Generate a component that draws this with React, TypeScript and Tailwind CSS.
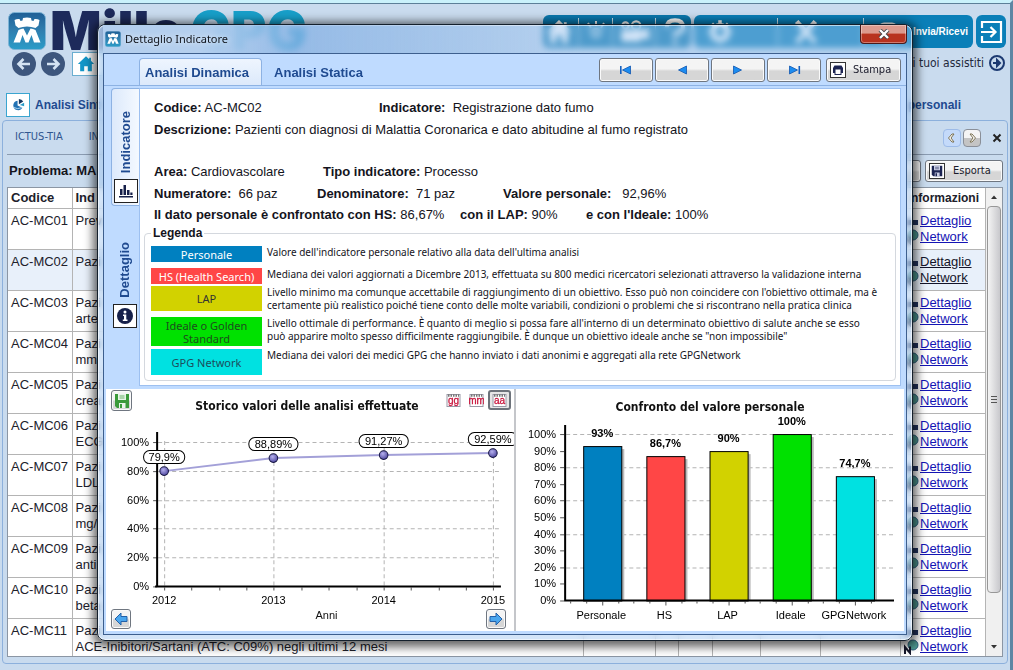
import type { ReactNode } from "react";

const UI = "font-['DejaVu_Sans_Condensed','Noto_Sans',sans-serif]";

const rows = [
  { code: "AC-MC01", lines: ["Prev"] },
  { code: "AC-MC02", lines: ["Pazi"], selected: true },
  { code: "AC-MC03", lines: ["Pazi", "arte"] },
  { code: "AC-MC04", lines: ["Pazi", "mm"] },
  { code: "AC-MC05", lines: ["Pazi", "crea"] },
  { code: "AC-MC06", lines: ["Pazi", "ECG"] },
  { code: "AC-MC07", lines: ["Pazi", "LDL"] },
  { code: "AC-MC08", lines: ["Pazi", "mg/"] },
  { code: "AC-MC09", lines: ["Pazi", "anti"] },
  { code: "AC-MC10", lines: ["Pazi", "beta"] },
  { code: "AC-MC11", lines: ["Pazi", "ACE-Inibitori/Sartani (ATC: C09%) negli ultimi 12 mesi"] },
];

const legend = [
  {
    name: "Personale",
    box: "h-4 mb-1.5 bg-[#0080c0] text-white",
    text: "Valore dell'indicatore personale relativo alla data dell'ultima analisi",
  },
  {
    name: "HS (Health Search)",
    box: "h-4 mb-0.5 bg-[#ff4646] text-white",
    text: "Mediana dei valori aggiornati a Dicembre 2013, effettuata su 800 medici ricercatori selezionati attraverso la validazione interna",
  },
  {
    name: "LAP",
    box: "h-[25px] mb-1.5 bg-[#d2d200] text-[#333]",
    text: "Livello minimo ma comunque accettabile di raggiungimento di un obiettivo. Esso può non coincidere con l'obiettivo ottimale, ma è certamente più realistico poiché tiene conto delle molte variabili, condizioni o problemi che si riscontrano nella pratica clinica",
  },
  {
    name: "Ideale o Golden Standard",
    box: "h-[29px] mb-[3px] bg-[#00e100] text-[#1d4d1d]",
    text: "Livello ottimale di performance. È quanto di meglio si possa fare all'interno di un determinato obiettivo di salute anche se esso può apparire molto spesso difficilmente raggiungibile. È dunque un obiettivo ideale anche se \"non impossibile\"",
  },
  {
    name: "GPG Network",
    box: "h-[26px] bg-[#00e1e1] text-[#1d4d5d]",
    text: "Mediana dei valori dei medici GPG che hanno inviato i dati anonimi e aggregati alla rete GPGNetwork",
  },
];

function Tower({ className }: { className: string }) {
  return (
    <svg viewBox="0 0 38 38" className={className} aria-hidden="true">
      <defs>
        <linearGradient id="towerBg" x1="0" y1="0" x2="0" y2="1">
          <stop offset="0" stopColor="#1f5f96" />
          <stop offset="0.5" stopColor="#2f7fb0" />
          <stop offset="1" stopColor="#2a9cc8" />
        </linearGradient>
      </defs>
      <rect x="0.5" y="0.5" width="37" height="37" rx="6" fill="url(#towerBg)" stroke="#7fb4d6" />
      <path
        fill="#fff"
        d="M6.500 8 Q9 6.500 11.500 7 L12.500 9 L14.500 8.500 L15 6 Q19 5 23 6 L23.500 8.500 L25.500 9 L26.500 7 Q29 6.500 31.500 8 L30.500 13.500 L27.500 16 Q19 13 10.500 16 L7.500 13.500 Z"
      />
      <path fill="#fff" d="M10.500 18 Q13 16.500 15.500 16.500 L19 23.500 L22.500 16.500 Q25 16.500 27.500 18 L32.500 30.500 H26 L23.500 23 L20.500 30.500 H17.500 L14.500 23 L12 30.500 H5.500 Z" />
    </svg>
  );
}

function CircleArrow({ flip }: { flip?: boolean }) {
  return (
    <svg viewBox="0 0 24 24" className="size-6" aria-hidden="true">
      <circle cx="12" cy="12" r="12" fill="#3d567d" />
      <path
        d={flip ? "M6 12 H17 M12.500 7 L17.500 12 L12.500 17" : "M18 12 H7 M11.500 7 L6.500 12 L11.500 17"}
        stroke="#d4e3f3"
        strokeWidth="2.600"
        fill="none"
      />
    </svg>
  );
}

function HomeShape({ className, color }: { className: string; color: string }) {
  return (
    <svg viewBox="0 0 20 20" className={className} aria-hidden="true">
      <path d="M10 1.500 L1 10 H3.500 V18 H8 V12.500 H12 V18 H16.500 V10 H19 L15.500 6.500 V3 H13.500 V4.800 Z" fill={color} />
    </svg>
  );
}

function Floppy({ className, color, label }: { className: string; color: string; label: string }) {
  return (
    <svg viewBox="0 0 16 16" className={className} aria-hidden="true">
      <path d="M1 1 H15 V15 H3 L1 13 Z" fill={color} />
      <rect x="4" y="1" width="8" height="6" fill={label} />
      <path d="M5.500 3 H10.500 M5.500 5 H10.500" stroke={color} strokeWidth="0.700" />
      <rect x="5" y="10" width="6.500" height="5" fill={label} />
      <rect x="6" y="11" width="2" height="4" fill={color} />
    </svg>
  );
}

function GreyButton({ label, className, children }: { label?: string; className: string; children: ReactNode }) {
  return (
    <button
      type="button"
      aria-label={label}
      className={`flex shrink-0 items-center rounded-[3px] border border-[#6f7680] bg-linear-to-b from-[#f4f4f4] from-45% to-[#d6d6d6] to-55% text-[#1a1a2a] shadow-[inset_0_0_0_1px_#fafafa] ${className}`}
    >
      {children}
    </button>
  );
}

function NavGlyph({ kind }: { kind: "first" | "prev" | "next" | "last" }) {
  const left = kind === "first" || kind === "prev";
  return (
    <svg viewBox="0 0 14 10" className="h-2.5 w-3.5" aria-hidden="true">
      <path d={left ? "M11.500 1 L3.500 5 L11.500 9 Z" : "M2.500 1 L10.500 5 L2.500 9 Z"} fill="#1c8cf0" stroke="#1157b0" strokeWidth="0.800" />
      {kind === "first" && <rect x="1" y="1" width="1.600" height="8" fill="#1560c0" />}
      {kind === "last" && <rect x="11.500" y="1" width="1.600" height="8" fill="#1560c0" />}
    </svg>
  );
}

function Field({ name, value, className }: { name: string; value: string; className?: string }) {
  return (
    <span className={`whitespace-pre ${className ?? ""}`}>
      <b>{name}</b> {value}
    </span>
  );
}

function CalendarButton({ text, active }: { text: string; active?: boolean }) {
  return (
    <button
      type="button"
      aria-pressed={!!active}
      className={`flex h-5 w-[23px] items-center justify-center rounded-[3px] ${active ? "border-2 border-[#6d737b] bg-[#e6e6e6]" : ""}`}
    >
      <svg viewBox="0 0 15 14" className="h-3.5 w-[15px] shrink-0">
        <rect x="1" y="1.500" width="13" height="12" fill="#fff" stroke="#9a9aa8" />
        <path d="M2 2.500 H13" stroke="#777" strokeWidth="2.500" strokeDasharray="1.500 1" />
        <text x="7.500" y="11" textAnchor="middle" fontSize="10" fill="#c8143c" stroke="#c8143c" strokeWidth="0.300" fontFamily="Liberation Sans">
          {text}
        </text>
      </svg>
    </button>
  );
}

function BlueArrow({ flip }: { flip?: boolean }) {
  return (
    <svg viewBox="0 0 14 14" className="size-3.5" aria-hidden="true">
      <path
        d={flip ? "M1 4.500 H7 V1 L13 7 L7 13 V9.500 H1 Z" : "M13 4.500 H7 V1 L1 7 L7 13 V9.500 H13 Z"}
        fill="#4aa6ee"
        stroke="#2360a8"
      />
    </svg>
  );
}

function HistoryChart() {
  const ticks = [
    ["100%", 23],
    ["80%", 52],
    ["60%", 81],
    ["40%", 109],
    ["20%", 138],
    ["0%", 167],
  ] as const;
  const points = [
    { year: "2012", x: 58, y: 52, label: "79,9%", lx: 58, ly: 38, w: 41 },
    { year: "2013", x: 167, y: 39, label: "88,89%", lx: 167, ly: 25, w: 49 },
    { year: "2014", x: 277, y: 36, label: "91,27%", lx: 277, ly: 22, w: 49 },
    { year: "2015", x: 386, y: 34, label: "92,59%", lx: 386, ly: 20, w: 49 },
  ];
  return (
    <svg viewBox="0 0 407 188" className="block w-full" fontFamily="Liberation Sans, sans-serif" fontSize="11">
      <defs>
        <radialGradient id="dot" cx="0.4" cy="0.35" r="0.7">
          <stop offset="0" stopColor="#b5b0ee" />
          <stop offset="1" stopColor="#4a429c" />
        </radialGradient>
      </defs>
      {ticks.map(([t, y]) => (
        <g key={t}>
          {y < 167 && <path d={`M52 ${y + 0.5} H394`} stroke="#b4b4b4" strokeDasharray="4 3" />}
          <path d={`M47 ${y + 0.5} H51`} stroke="#555" />
          <text x="43" y={y + 4} textAnchor="end">{t}</text>
        </g>
      ))}
      {points.map((p) => (
        <g key={p.year}>
          <path d={`M${p.x + 0.5} 22 V166`} stroke="#b4b4b4" strokeDasharray="4 3" />
          <text x={p.x} y="185" textAnchor="middle">{p.year}</text>
        </g>
      ))}
      {[58, 85, 113, 140, 167, 195, 222, 250, 277, 304, 332, 359, 386].map((x) => (
        <path key={x} d={`M${x + 0.5} 168 V171`} stroke="#555" />
      ))}
      <path d="M51 13 V167.500 M49 167 H394" stroke="#000" strokeWidth="2" />
      <path d="M58 52 L167 39 L277 36 L386 34" stroke="#a3a0d8" strokeWidth="2" fill="none" />
      {points.map((p) => (
        <g key={p.label}>
          <circle cx={p.x} cy={p.y} r="4.300" fill="url(#dot)" stroke="#161640" />
          <rect x={p.lx - p.w / 2} y={p.ly - 6.500} width={p.w} height="13" rx="6" fill="#fff" stroke="#000" />
          <text x={p.lx} y={p.ly + 4} textAnchor="middle">{p.label}</text>
        </g>
      ))}
    </svg>
  );
}

function CompareChart() {
  const bars = [
    { name: "Personale", value: 93, label: "93%", color: "#0080c0" },
    { name: "HS", value: 86.7, label: "86,7%", color: "#ff4646" },
    { name: "LAP", value: 90, label: "90%", color: "#d2d200" },
    { name: "Ideale", value: 100, label: "100%", color: "#00e100" },
    { name: "GPGNetwork", value: 74.7, label: "74,7%", color: "#00e1e1" },
  ];
  const yOf = (v: number) => Math.round(186 - v * 1.66);
  return (
    <svg viewBox="0 0 387 208" className="block w-full" fontFamily="Liberation Sans, sans-serif" fontSize="11">
      {[0, 10, 20, 30, 40, 50, 60, 70, 80, 90, 100].map((v) => (
        <g key={v}>
          {v > 0 && v % 20 === 0 && <path d={`M50 ${yOf(v) + 0.5} H377`} stroke="#b4b4b4" strokeDasharray="4 3" />}
          <path d={`M44 ${yOf(v) + 0.5} H48`} stroke="#555" />
          <text x="40" y={yOf(v) + 4} textAnchor="end">{v}%</text>
        </g>
      ))}
      {bars.map((b, i) => {
        const x = 67 + i * 63;
        const y = yOf(b.value);
        return (
          <g key={b.name}>
            <rect x={x + 2} y={y + 3} width="39" height={183 - y} fill="#bbb" />
            <rect x={x + 0.5} y={y + 0.5} width="38" height={186 - y} fill={b.color} stroke="#000" />
            <text x={x + 19} y={y - 9} textAnchor="middle" fontWeight="bold">{b.label}</text>
            <text x={x + 18} y="204" textAnchor="middle">{b.name}</text>
            {[-13, 3, 19, 35].map((o) => (
              <path key={o} d={`M${x + o + 0.5} 187 V${o === 19 ? 191 : 189}`} stroke="#555" />
            ))}
          </g>
        );
      })}
      <path d="M49 11 V187 M48 186 H377" stroke="#000" strokeWidth="2" />
    </svg>
  );
}

function AppWindow() {
  return (
    <div className="flex h-full flex-col border-t-[3px] border-r-[3px] border-t-[#c9f1fb] border-r-[#5d86a3] bg-[#c9dbee]">
      <header className="flex justify-between border-t border-[#5c7f98] pt-[7px] pr-1 pl-2">
        <div>
          <div className="flex h-10 items-center gap-1">
            <Tower className="size-[38px]" />
            <span className="font-['Inter',sans-serif] text-[54px] leading-10 font-black text-[#1d2a5b]">
              Mille<span className="ml-2 text-[#189fc9]">GPG</span>
            </span>
          </div>
          <div className="mt-px flex items-center gap-[5px] pl-1">
            <button type="button" aria-label="Indietro"><CircleArrow /></button>
            <button type="button" aria-label="Avanti"><CircleArrow flip /></button>
            <button type="button" aria-label="Home" className="ml-0.5 flex h-6 w-8 items-center border border-[#6aaed0] bg-white pl-1">
              <HomeShape className="size-[18px]" color="#1496c8" />
            </button>
          </div>
        </div>
        <div className="flex flex-col items-end pt-1">
          <div className="flex gap-[3px]">
            <div className="flex h-[33px] w-[148px] items-center justify-around rounded-md bg-[#0a78ae]">
              <HomeShape className="size-7" color="#fff" />
              <i className="h-7 w-px bg-white/80" />
              <svg viewBox="0 0 24 24" className="size-6"><path d="M12 1 V6 M4 3 L7 8 M20 3 L17 8 M8 13 A4 4 0 1 0 16 13 A4 4 0 1 0 8 13" stroke="#fff" strokeWidth="2" fill="none" /></svg>
              <i className="h-7 w-px bg-white/80" />
              <svg viewBox="0 0 30 24" className="h-7 w-8"><path d="M3 11 H22 L29 8 V20 L22 17 V21 H3 Z" fill="#fff" /><circle cx="7" cy="6" r="3" fill="none" stroke="#fff" strokeWidth="2" /><circle cx="17" cy="6" r="4" fill="none" stroke="#fff" strokeWidth="2" /></svg>
              <i className="h-7 w-px bg-white/80" />
              <svg viewBox="0 0 24 24" className="size-7"><path d="M5 8 Q5 2 12 2 Q19 2 19 8 Q19 12 12 13.500 V16 M12 19 V22.500" stroke="#fff" strokeWidth="3.500" fill="none" /></svg>
            </div>
            <div className="flex h-[33px] w-[279px] items-center justify-between rounded-md bg-[#0a7fb8] pr-[5px] pl-3">
              <svg viewBox="0 0 24 24" className="size-7"><circle cx="12" cy="12" r="6" fill="none" stroke="#fff" strokeWidth="4" /><path d="M12 2 V6 M12 18 V22 M2 12 H6 M18 12 H22 M5 5 L8 8 M16 16 L19 19 M19 5 L16 8 M8 16 L5 19" stroke="#fff" strokeWidth="3" /></svg>
              <i className="ml-7 h-7 w-px bg-white/80" />
              <svg viewBox="0 0 24 24" className="size-7"><path d="M4 3 L20 21 M20 3 L4 21" stroke="#fff" strokeWidth="4" /></svg>
              <i className="ml-7 h-7 w-px bg-white/80" />
              <svg viewBox="0 0 20 24" className="h-7 w-5"><rect x="2" y="4" width="16" height="16" rx="4" fill="none" stroke="#fff" strokeWidth="3" /></svg>
              <span className="font-['Liberation_Sans',sans-serif] text-[10px] font-bold text-white">Invia/Ricevi</span>
            </div>
            <button type="button" aria-label="Esci" className="flex h-[33px] w-[30px] items-center justify-center rounded-md bg-[#0a7fb8]">
              <svg viewBox="0 0 24 24" className="size-6" fill="none" stroke="#fff" strokeWidth="2.200">
                <path d="M3 8 V2 H22 V22 H3 V16 M2 12 H16 M11.500 7 L16.500 12 L11.500 17" />
              </svg>
            </button>
          </div>
          <a href="#assistiti" className={`mt-1.5 flex items-center gap-1 text-[12px] text-[#1f2a3c] ${UI}`}>
            i tuoi assistiti
            <svg viewBox="0 0 18 18" className="size-[18px]"><circle cx="9" cy="9" r="7" fill="none" stroke="#1d3a72" strokeWidth="2" /><path d="M5 9 H11 M9 6 L12 9 L9 12 Z" stroke="#1d3a72" strokeWidth="2" fill="#1d3a72" /></svg>
          </a>
        </div>
      </header>

      <nav className="mt-[15px] flex h-7 items-center justify-between pr-[49px] pl-1.5 text-[12px] font-bold text-[#1f4a90]">
        <a href="#sintesi" className="flex items-center gap-[5px]">
          <span className="flex size-6 items-center justify-center border border-[#3aa5d0] bg-white">
            <svg viewBox="0 0 16 16" className="size-3.5"><path d="M7.500 3 A5.500 5.500 0 1 0 13 11 L7.500 8.500 Z" fill="#2272b4" /><path d="M9 1 V7 L14 4 A6 6 0 0 0 9 1" fill="#16365f" /><path d="M10 8 L15 5.500 V9.500 Z" fill="#2a9cc8" /><path d="M2.500 10.500 Q7 13.500 12.500 11" stroke="#bfe0f5" fill="none" /></svg>
          </span>
          Analisi Sint
        </a>
        <a href="#personali">personali</a>
      </nav>

      <section className="mt-px mr-0.5 mb-1.5 ml-0.5 flex min-h-0 flex-1 flex-col rounded border border-[#8cb0dc] px-1 pb-1.5">
        <div className={`flex h-[34px] shrink-0 items-center justify-between border-b border-[#8a9bb0] pl-2 text-[11px] text-[#2f568f] ${UI}`}>
          <div className="flex gap-[26px]">
            <a href="#ictus">ICTUS-TIA</a>
            <a href="#in">IN</a>
          </div>
          <div className="flex items-center gap-0.5">
            <button type="button" aria-label="Scorri a sinistra" className="flex size-[18px] items-center justify-center rounded border border-[#9dbbe8] bg-[#c4dafa]">
              <svg viewBox="0 0 10 10" className="size-2.5" fill="#fff" stroke="#7a7050"><path d="M5 1 L1.500 5 L5 9 H7 L4 5 L7 1 Z" /></svg>
            </button>
            <button type="button" aria-label="Scorri a destra" className="flex size-[18px] items-center justify-center rounded border border-[#8a8f98] bg-linear-to-b from-[#f4f4f4] from-50% to-[#c4c4c4] to-50%">
              <svg viewBox="0 0 10 10" className="size-2.5" fill="#fff" stroke="#7a7050"><path d="M5 1 L8.500 5 L5 9 H3 L6 5 L3 1 Z" /></svg>
            </button>
            <button type="button" aria-label="Chiudi scheda" className="ml-2 flex size-3 items-center justify-center">
              <svg viewBox="0 0 10 10" className="size-2.5"><path d="M1.500 1.500 L8.500 8.500 M8.500 1.500 L1.500 8.500" stroke="#222" strokeWidth="2" /></svg>
            </button>
          </div>
        </div>
        <div className="flex h-8 shrink-0 items-center justify-between pl-0.5">
          <h2 className="text-[13px] font-bold text-[#14141c]">Problema: MA</h2>
          <div className={`flex gap-1 text-[11px] ${UI}`}>
            <GreyButton label="Stampa elenco" className="h-[22px] w-10">{null}</GreyButton>
            <GreyButton className="h-[22px] w-[78px] gap-2 pl-[3px]">
              <span className="border border-[#333] bg-white p-px"><Floppy className="size-3" color="#1c2452" label="#c9cde4" /></span>
              Esporta
            </GreyButton>
          </div>
        </div>
        <div className="flex min-h-0 flex-1 border border-[#8b96a4] bg-white">
          <div className="min-w-0 flex-1 overflow-hidden">
            <table className="w-full table-fixed border-collapse text-[13px] leading-4 text-[#20202a]">
              <colgroup>
                <col className="w-16" />
                <col />
                <col className="w-[72px]" />
                <col className="w-[23px]" />
                <col className="w-[34px]" />
                <col className="w-12" />
                <col className="w-[60px]" />
                <col className="w-20" />
                <col className="w-[85px]" />
              </colgroup>
              <thead>
                <tr className="h-5 border-b border-[#b4b4b4] text-left">
                  <th className="border-r border-[#b4b4b4] pl-[3px]">Codice</th>
                  <th className="border-r border-[#b4b4b4] pl-[3px]">Ind</th>
                  <th colSpan={6} className="border-r border-[#b4b4b4]" />
                  <th className="border-r border-[#b4b4b4] pr-1.5 text-right text-[12px]">nformazioni</th>
                </tr>
              </thead>
              <tbody>
                {rows.map((r) => (
                  <tr key={r.code} className={`h-[41px] border-b border-[#b4b4b4] align-top ${r.selected ? "bg-[#e8f0fa]" : ""}`}>
                    <td className="border-r border-[#b4b4b4] pt-1 pl-[3px]">{r.code}</td>
                    <td className="border-r border-[#b4b4b4] pt-1 pl-[3px] whitespace-nowrap">
                      {r.lines.map((l) => (
                        <div key={l}>{l}</div>
                      ))}
                    </td>
                    <td className="border-r border-[#b4b4b4]" />
                    <td className="border-r border-[#b4b4b4]" />
                    <td className="border-r border-[#b4b4b4]" />
                    <td className="border-r border-[#b4b4b4]" />
                    <td className="border-r border-[#b4b4b4]" />
                    <td className="border-r border-[#b4b4b4]" />
                    <td className="border-r border-[#b4b4b4] pt-1">
                      <div className="flex gap-px pl-0.5">
                        <svg viewBox="0 0 16 32" className="h-8 w-4"><rect x="2" y="7" width="13" height="5" fill="#23345f" /><circle cx="10" cy="22" r="5" fill="#4f9a92" stroke="#2d5f7d" /><path d="M2 31 V24 L7 30 V23.500" stroke="#16182c" strokeWidth="2" fill="none" /></svg>
                        <div className={`flex flex-col underline ${r.selected ? "text-[#14142a]" : "text-[#1414b4]"}`}>
                          <a href="#dettaglio">Dettaglio</a>
                          <a href="#network">Network</a>
                        </div>
                      </div>
                    </td>
                  </tr>
                ))}
              </tbody>
            </table>
          </div>
          <div className="flex w-4 shrink-0 flex-col items-center justify-between bg-[#f0f0f0]">
            <svg viewBox="0 0 16 18" className="h-[18px] w-4"><path d="M5 11 L8 7.500 L11 11 Z" fill="#333" /></svg>
            <div className="mb-[45px] flex w-3.5 flex-1 flex-col items-center justify-center gap-0.5 rounded-sm border border-[#979797] bg-linear-to-r from-[#f4f4f4] to-[#c8c8cc]">
              <i className="h-px w-1.5 bg-[#555]" />
              <i className="h-px w-1.5 bg-[#555]" />
              <i className="h-px w-1.5 bg-[#555]" />
            </div>
            <svg viewBox="0 0 16 18" className="h-[18px] w-4"><path d="M5 7 L8 10.500 L11 7 Z" fill="#333" /></svg>
          </div>
        </div>
      </section>
    </div>
  );
}

function Dialog() {
  return (
    <div
      role="dialog"
      aria-label="Dettaglio Indicatore"
      className="absolute top-6 right-[100px] left-[97px] rounded-lg border border-[#14202c] bg-[#a0c6f0]/45 px-[5px] pb-[5px] shadow-[0_2px_10px_4px_rgba(0,0,0,0.6),inset_0_0_0_1px_rgba(255,255,255,0.6)] backdrop-blur-[3px]"
    >
      <div className="flex h-7 justify-between bg-linear-to-r from-[#b4cfee] from-12% via-[#7fabe0]/60 via-24% to-transparent to-60%">
        <div className="flex items-center gap-1 pl-0.5">
          <Tower className="size-4" />
          <h1 className="font-['Noto_Sans',sans-serif] text-[11px] text-[#10141c] text-shadow-[0_0_6px_#fff]">Dettaglio Indicatore</h1>
        </div>
        <button
          type="button"
          aria-label="Chiudi"
          className="flex h-[19px] w-[47px] items-center justify-center rounded-b border border-t-0 border-[#4b1a1a] bg-linear-to-b from-[#dc9a8e] from-45% to-[#b8331f] to-50% shadow-[inset_0_0_0_1px_rgba(255,255,255,0.35)]"
        >
          <svg viewBox="0 0 12 10" className="h-2.5 w-3"><path d="M2 1 L10 9 M10 1 L2 9" stroke="#444" strokeWidth="4" /><path d="M2 1 L10 9 M10 1 L2 9" stroke="#fff" strokeWidth="2.400" /></svg>
        </button>
      </div>

      <div className="border border-[#3d5f8e] bg-[#bfdbff]">
        <div className="flex h-[31px] items-end justify-between pr-[5px] pl-[35px]">
          <div role="tablist" className="flex text-[13px] font-bold text-[#1f4a90]">
            <button type="button" role="tab" aria-selected="true" className="h-[27px] rounded-t border border-b-0 border-[#8db2e3] bg-linear-to-b from-[#eef5fe] to-[#dce9fb] pt-0.5 pr-3 pl-[5px] font-bold">
              Analisi Dinamica
            </button>
            <button type="button" role="tab" aria-selected="false" className="h-[27px] px-3 pt-0.5 font-bold">
              Analisi Statica
            </button>
          </div>
          <div className={`mb-[3px] flex gap-0.5 text-[11px] ${UI}`}>
            <GreyButton label="Primo" className="h-6 w-[54px] justify-center"><NavGlyph kind="first" /></GreyButton>
            <GreyButton label="Precedente" className="h-6 w-[54px] justify-center"><NavGlyph kind="prev" /></GreyButton>
            <GreyButton label="Successivo" className="h-6 w-[54px] justify-center"><NavGlyph kind="next" /></GreyButton>
            <GreyButton label="Ultimo" className="h-6 w-[54px] justify-center"><NavGlyph kind="last" /></GreyButton>
            <GreyButton className="ml-[3px] h-6 w-[75px] gap-[7px] pl-[3px]">
              <span className="border border-[#333] bg-white p-px">
                <svg viewBox="0 0 12 12" className="size-3"><path d="M2.500 1.500 H9.500 L11 4 V9 H9.500 V11 H2.500 V9 H1 V4 Z" fill="#1c2452" /><rect x="3.500" y="5.500" width="5" height="4.500" fill="#fff" /></svg>
              </span>
              Stampa
            </GreyButton>
          </div>
        </div>

        <div className="flex border-t border-[#8db2e3] pt-0.5 pr-[5px] pl-[7px]">
          <div role="tablist" aria-orientation="vertical" className="flex w-7 shrink-0 flex-col text-[13px] font-bold text-[#1f4a90]">
            <button type="button" role="tab" aria-selected="true" className="flex h-[118px] flex-col items-center justify-end gap-1.5 rounded-l border border-r-0 border-[#8db2e3] bg-linear-to-r from-[#dce9fb] to-[#f4f9ff] pb-0.5">
              <span className="rotate-180 [writing-mode:vertical-rl]">Indicatore</span>
              <span className="flex size-6 items-center justify-center border border-[#222] bg-white">
                <svg viewBox="0 0 16 16" className="size-4" fill="#16204a"><path d="M1 13 H15 V14.500 H1 Z M2 6 H4.500 V12 H2 Z M5.500 2 H8 V12 H5.500 Z M9 7 H11.500 V12 H9 Z M12.300 9.500 H14.500 V12 H12.300 Z" /></svg>
              </span>
            </button>
            <button type="button" role="tab" aria-selected="false" className="flex h-[122px] flex-col items-center justify-end gap-1.5">
              <span className="rotate-180 [writing-mode:vertical-rl]">Dettaglio</span>
              <span className="flex size-6 items-center justify-center border border-[#222] bg-white">
                <svg viewBox="0 0 16 16" className="size-4"><circle cx="8" cy="8" r="8" fill="#16204a" /><circle cx="8" cy="4" r="1.500" fill="#fff" /><path d="M6 6.500 H9.300 V11.500 H10.500 V13 H5.800 V11.500 H7 V8 H6 Z" fill="#fff" /></svg>
              </span>
            </button>
          </div>

          <div role="tabpanel" className="min-w-0 flex-1 border border-[#9dc0f0] bg-white px-1 pt-2 pb-1 text-[13px] leading-[22px] text-[#14141c]">
            <div className="pl-2.5">
              <div className="flex"><Field className="w-[225px]" name="Codice:" value="AC-MC02" /><Field name="Indicatore:" value=" Registrazione dato fumo" /></div>
              <div><Field name="Descrizione:" value="Pazienti con diagnosi di Malattia Coronarica e dato abitudine al fumo registrato" /></div>
              <div className="mt-5 flex"><Field className="w-[169px]" name="Area:" value="Cardiovascolare" /><Field name="Tipo indicatore:" value="Processo" /></div>
              <div className="flex"><Field className="w-[163px]" name="Numeratore:" value=" 66 paz" /><Field className="w-[186px]" name="Denominatore:" value=" 71 paz" /><Field name="Valore personale:" value="  92,96%" /></div>
              <div className="flex leading-5"><Field className="w-[306px]" name="Il dato personale è confrontato con HS:" value="86,67%" /><Field className="w-[126px]" name="con il LAP:" value="90%" /><Field name="e con l'Ideale:" value="100%" /></div>
            </div>
            <fieldset className="rounded-sm border border-[#d4d8de] px-1.5 pt-[5px] pb-[5px]">
              <legend className="px-0.5 text-[12px] leading-4 font-bold">Legenda</legend>
              <dl className="font-['Noto_Sans',sans-serif] text-[10px] leading-[13px]">
                {legend.map((l) => (
                  <div key={l.name} className="flex gap-[5px]">
                    <dt className={`flex w-[111px] shrink-0 items-center justify-center text-center text-[11px] ${l.box}`}>{l.name}</dt>
                    <dd className="h-4 min-w-0 flex-1 pr-[9px]">{l.text}</dd>
                  </div>
                ))}
              </dl>
            </fieldset>
          </div>
        </div>

        <div className="mx-0.5 mt-[3px] mb-[3px] flex bg-white text-[#111]">
          <section className="min-w-0 flex-[409] border-r-2 border-[#c4c6ca]">
            <div className="flex h-[30px] justify-between pt-px pr-[3px] pl-[5px]">
              <GreyButton label="Salva grafico" className="h-[21px] w-[21px] justify-center"><Floppy className="size-4" color="#3a9a3a" label="#e8f4e8" /></GreyButton>
              <h3 className={`ml-10 pt-2 text-[12px] leading-4 font-bold ${UI}`}>Storico valori delle analisi effettuate</h3>
              <div className="flex"><CalendarButton text="gg" /><CalendarButton text="mm" /><CalendarButton text="aa" active /></div>
            </div>
            <HistoryChart />
            <div className="flex h-6 items-end justify-between pr-2 pb-0.5 pl-[5px] text-[11px] leading-4">
              <GreyButton label="Periodo precedente" className="size-5 justify-center"><BlueArrow /></GreyButton>
              <span className="ml-9 self-start">Anni</span>
              <GreyButton label="Periodo successivo" className="size-5 justify-center"><BlueArrow flip /></GreyButton>
            </div>
          </section>
          <section className="min-w-0 flex-[389]">
            <h3 className={`h-[25px] pt-2.5 text-center text-[12px] leading-4 font-bold ${UI}`}>Confronto del valore personale</h3>
            <CompareChart />
          </section>
        </div>
      </div>
    </div>
  );
}

export default function App() {
  return (
    <div className="relative h-screen overflow-hidden font-['Liberation_Sans',Arial,sans-serif]">
      <AppWindow />
      <Dialog />
    </div>
  );
}
